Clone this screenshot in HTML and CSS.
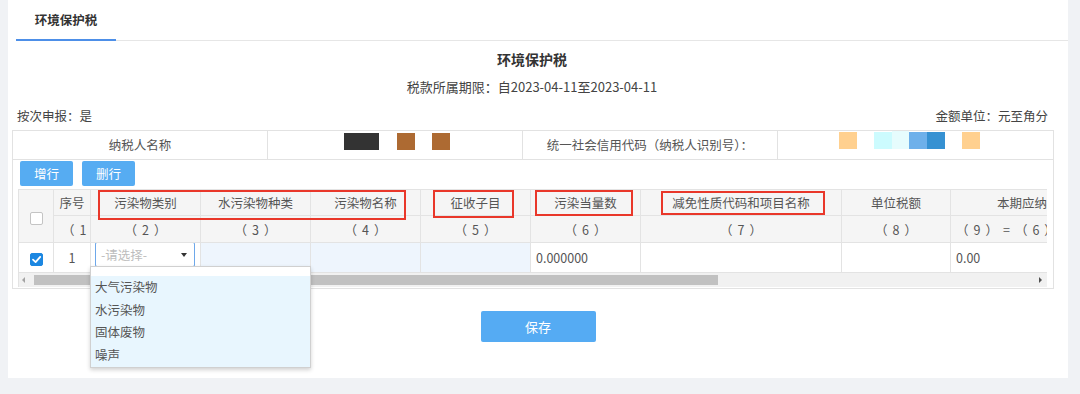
FILE: index.html
```html
<!DOCTYPE html>
<html lang="zh-CN">
<head>
<meta charset="utf-8">
<title>环境保护税</title>
<link rel="stylesheet" href="styles.css">
</head>
<body>
<div class="panel">
  <div class="tabs"><div class="tab">环境保护税</div></div>
  <h1 class="title">环境保护税</h1>
  <div class="period">税款所属期限：自2023-04-11至2023-04-11</div>
  <div class="meta"><span>按次申报：是</span><span>金额单位：元至角分</span></div>

  <div class="box">
    <div class="info">
      <div class="icell label">纳税人名称</div>
      <div class="icell val val-left">
        <span class="blk b-dark"></span><span class="blk b-brown g1"></span><span class="blk b-brown g2"></span>
      </div>
      <div class="icell label">统一社会信用代码（纳税人识别号）：</div>
      <div class="icell val val-right">
        <span class="blk b-peach"></span><span class="blk b-cyan"></span><span class="blk b-cyan2"></span><span class="blk b-blue"></span><span class="blk b-blue2"></span><span class="blk b-peach g3"></span>
      </div>
    </div>

    <div class="toolbar">
      <button class="tbtn">增行</button>
      <button class="tbtn">删行</button>
    </div>

    <div class="grid">
      <table class="tbl">
        <colgroup>
          <col class="c-chk"><col class="c-no"><col class="c-m"><col class="c-m"><col class="c-m"><col class="c-m"><col class="c-m"><col class="c-w"><col class="c-u"><col class="c-l">
        </colgroup>
        <thead>
          <tr class="h1">
            <th rowspan="2" class="chk-cell"><span class="cb"></span></th>
            <th>序号</th>
            <th>污染物类别</th>
            <th>水污染物种类</th>
            <th>污染物名称</th>
            <th>征收子目</th>
            <th>污染当量数</th>
            <th>减免性质代码和项目名称</th>
            <th>单位税额</th>
            <th>本期应纳税额</th>
          </tr>
          <tr class="h2">
            <th class="clip-left">（1）</th>
            <th>（2）</th>
            <th>（3）</th>
            <th>（4）</th>
            <th>（5）</th>
            <th>（6）</th>
            <th>（7）</th>
            <th>（8）</th>
            <th>（9）=（6）×（8）</th>
          </tr>
        </thead>
        <tbody>
          <tr class="drow">
            <td class="chk-cell"><span class="cb on"><svg viewBox="0 0 13 13" width="13" height="13"><path d="M3 6.6 L5.6 9.1 L10.2 3.9" fill="none" stroke="#fff" stroke-width="1.8" stroke-linecap="round" stroke-linejoin="round"/></svg></span></td>
            <td class="center">1</td>
            <td class="sel-cell"><div class="select"><span class="ph">-请选择-</span><span class="caret"></span></div></td>
            <td class="ro"></td>
            <td class="ro"></td>
            <td class="ro"></td>
            <td class="num">0.000000</td>
            <td></td>
            <td></td>
            <td class="num">0.00</td>
          </tr>
        </tbody>
      </table>
      <div class="hscroll">
        <span class="arr-l"></span>
        <span class="thumb"></span>
        <span class="arr-r"></span>
      </div>
      <span class="mark m1"></span>
      <span class="mark m2"></span>
      <span class="mark m3"></span>
      <span class="mark m4"></span>
    </div>

    <ul class="dropdown">
      <li>大气污染物</li>
      <li>水污染物</li>
      <li>固体废物</li>
      <li>噪声</li>
    </ul>
  </div>

  <div class="actions"><button class="save">保存</button></div>
</div>
</body>
</html>
```

FILE: styles.css
```css
* { box-sizing: border-box; }
html, body { margin: 0; padding: 0; }
body {
  background: #f0f2f5;
  font-family: "Noto Sans CJK SC", "Noto Sans", sans-serif;
  color: #555;
  font-size: 12.5px;
}
.panel {
  margin: 0 12px 0 8px;
  background: #fff;
  height: 378px;
  overflow: hidden;
}
.tabs {
  margin-left: 8px;
  height: 41px;
  border-bottom: 1px solid #e6e6e6;
}
.tab {
  width: 100px;
  height: 41px;
  line-height: 39px;
  text-align: center;
  font-weight: bold;
  font-size: 12.5px;
  color: #333;
  border-bottom: 2px solid #4d8fe8;
}
.title {
  margin: 8px 0 0;
  padding-right: 12px;
  font-size: 14px;
  line-height: 20px;
  font-weight: bold;
  color: #333;
  text-align: center;
}
.period {
  margin-top: 8px;
  padding-right: 12px;
  line-height: 20px;
  font-size: 13px;
  color: #444;
  text-align: center;
}
.meta {
  margin-top: 11px;
  line-height: 16px;
  display: flex;
  justify-content: space-between;
  padding: 0 20px 0 9px;
  color: #444;
}
.box {
  position: relative;
  margin: 6px 14px 0 4px;
  border: 1px solid #e2e2e2;
  padding-bottom: 1px;
}
.info {
  display: grid;
  grid-template-columns: 254px 255px 255px 1fr;
  height: 29px;
  border-bottom: 1px solid #e2e2e2;
}
.icell {
  height: 28px;
  line-height: 28px;
  text-align: center;
  color: #555;
}
.icell + .icell { border-left: 1px solid #e2e2e2; }
.val { position: relative; }
.blk {
  position: absolute;
  top: 2px;
  height: 17px;
}
.b-dark { background: #333; left: 76px; width: 35px; }
.b-brown { background: #ad6a32; width: 18px; }
.g1 { left: 129px; }
.g2 { left: 164px; }
.b-peach { background: #ffd08f; left: 61px; width: 18px; top: 1px; }
.g3 { left: 184px; }
.b-cyan { background: #ccfbfe; left: 96px; width: 18px; top: 1px; }
.b-cyan2 { background: #e6fcfd; left: 114px; width: 17px; top: 0; height: 18px; }
.b-blue { background: #6eb0ea; left: 131px; width: 18px; top: 1px; }
.b-blue2 { background: #3691d2; left: 149px; width: 18px; top: 1px; }

.toolbar {
  height: 29px;
  padding: 1px 0 0 7px;
  display: flex;
  gap: 9px;
}
.tbtn {
  width: 53px;
  height: 25px;
  border: 0;
  border-radius: 2px;
  background: #56acf2;
  color: #fff;
  font-family: inherit;
  font-size: 12.5px;
  padding: 0;
}
.grid {
  position: relative;
  margin-left: 5px;
  width: 1029px;
  overflow: hidden;
}
.tbl {
  table-layout: fixed;
  border-collapse: collapse;
  width: 1100px;
}
.c-chk { width: 35px; }
.c-no { width: 37px; }
.c-m { width: 110px; }
.c-w { width: 201px; }
.c-u { width: 109px; }
.c-l { width: 168px; }
.tbl th, .tbl td {
  border: 1px solid #e3e3e3;
  padding: 0;
  white-space: nowrap;
  overflow: hidden;
}
.tbl th {
  background: #f5f5f5;
  font-weight: normal;
  color: #555;
  text-align: center;
}
.h1 th { height: 26px; }
.h2 th {
  height: 27px;
  letter-spacing: 5px;
  padding-left: 5px;
}
.tbl .h2 th.clip-left { text-align: left; padding-left: 8px; }
.drow td { height: 30px; }
.chk-cell { text-align: center; }
.cb {
  display: inline-block;
  width: 13px;
  height: 13px;
  border: 1px solid #c4c4c4;
  border-radius: 2px;
  background: #fff;
  vertical-align: middle;
}
.cb.on {
  background: #1c87e1;
  border-color: #1c87e1;
  position: relative;
}
.cb.on svg { position: absolute; left: -1px; top: -1px; }
.center { text-align: center; }
.num { padding-left: 5px !important; color: #555; }
.ro { background: #eef5fd; }
.sel-cell { vertical-align: top; padding: 0 5px 0 4px !important; }
.select {
  position: relative;
  margin-top: -1px;
  height: 25px;
  border: 1px solid #6ea8ea;
  border-radius: 2px;
  background: #fff;
  line-height: 23px;
  padding-left: 5px;
}
.ph { color: #bdbdbd; }
.caret {
  position: absolute;
  right: 7px;
  top: 10px;
  border-left: 3.5px solid transparent;
  border-right: 3.5px solid transparent;
  border-top: 4px solid #333;
}
.hscroll {
  position: relative;
  height: 14px;
  background: #f1f1f1;
  border-left: 1px solid #e3e3e3;
}
.arr-l {
  position: absolute;
  left: 3px;
  top: 4px;
  border-top: 3px solid transparent;
  border-bottom: 3px solid transparent;
  border-right: 3px solid #a3a3a3;
}
.thumb {
  position: absolute;
  left: 15px;
  top: 2px;
  width: 684px;
  height: 10px;
  background: #c1c1c1;
}
.arr-r {
  position: absolute;
  right: 5px;
  top: 4px;
  border-top: 3px solid transparent;
  border-bottom: 3px solid transparent;
  border-left: 3px solid #505050;
}
.mark {
  position: absolute;
  border: 2px solid #e9372a;
}
.m1 { left: 80px; top: 1px; width: 308px; height: 30px; }
.m2 { left: 415px; top: 1px; width: 81px; height: 28px; }
.m3 { left: 517px; top: 1px; width: 98px; height: 26px; }
.m4 { left: 643px; top: 2px; width: 164px; height: 24px; }

.dropdown {
  position: absolute;
  left: 77px;
  top: 135px;
  width: 221px;
  height: 102px;
  margin: 0;
  padding: 9px 0 0;
  list-style: none;
  background: #fff;
  border: 1px solid #d0d0d0;
  box-shadow: 0 2px 4px rgba(0,0,0,0.18);
  z-index: 5;
}
.dropdown li {
  background: #e8f6fe;
  height: 22.7px;
  line-height: 22.7px;
  padding-left: 4px;
  color: #555;
}
.actions {
  margin-top: 22px;
  display: flex;
  justify-content: center;
}
.save {
  width: 115px;
  height: 31px;
  border: 0;
  border-radius: 2px;
  background: #55abf3;
  color: #fff;
  font-family: inherit;
  font-size: 13px;
  padding: 0;
}
```
